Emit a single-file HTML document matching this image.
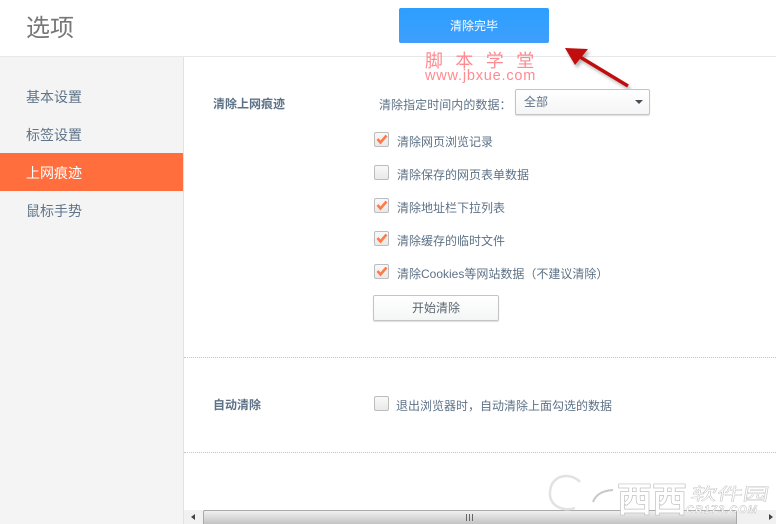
<!DOCTYPE html>
<html lang="zh">
<head>
<meta charset="utf-8">
<style>
html,body{margin:0;padding:0;background:#fff}
body{position:relative;width:776px;height:524px;overflow:hidden;font-family:"Liberation Sans","WenQuanYi Zen Hei","Noto Sans CJK SC",sans-serif;font-size:12px;color:#5d7287}
.a{position:absolute;white-space:nowrap;line-height:16px}
.cb{position:absolute;left:374px;width:13px;height:13px;border:1px solid #bdbdbd;border-radius:2px;background:linear-gradient(#f9f9f9,#e9e9e9)}
.cb svg{position:absolute;left:1px;top:0}
.nav{left:26px;font-size:14px;line-height:18px;color:#5f7488}
</style>
</head>
<body>
<div class="a" style="left:26px;top:14px;font-size:24px;line-height:30px;color:#777">选项</div>
<div style="position:absolute;left:0;top:56px;width:776px;height:1px;background:#e8e8e8"></div>

<div style="position:absolute;left:0;top:57px;width:183px;height:467px;background:#f4f4f4;border-right:1px solid #dfe3e6"></div>
<div style="position:absolute;left:0;top:153px;width:183px;height:38px;background:#ff6e3c"></div>
<div class="a nav" style="top:88px">基本设置</div>
<div class="a nav" style="top:126px">标签设置</div>
<div class="a nav" style="top:164px;color:#fff">上网痕迹</div>
<div class="a nav" style="top:202px">鼠标手势</div>

<div style="position:absolute;left:399px;top:8px;width:150px;height:35px;border-radius:2px;background:linear-gradient(#2c9fff,#3f9ffb);color:#fff;text-align:center;line-height:36px">清除完毕</div>
<div class="a" style="left:425px;top:50px;font-size:18px;line-height:22px;letter-spacing:12.4px;color:#ff8a90">脚本学堂</div>
<div class="a" style="left:425px;top:68px;font-size:14.5px;line-height:17px;letter-spacing:.8px;color:#ff8a90">www.jbxue.com</div>

<svg style="position:absolute;left:560px;top:40px" width="80" height="60" viewBox="0 0 80 60">
<defs><filter id="s" x="-20%" y="-20%" width="140%" height="140%"><feGaussianBlur stdDeviation="1.6"/></filter></defs>
<g transform="translate(2,3)" opacity=".45" filter="url(#s)"><path d="M68 46 L20 17" stroke="#555" stroke-width="3" fill="none"/><path d="M5 8 L28 9 L15 25Z" fill="#555"/></g>
<path d="M68 46 L20 17" stroke="#c00d0d" stroke-width="3.4" fill="none"/>
<path d="M5 8 L28 9 L15 25Z" fill="#c00d0d"/>
</svg>

<div class="a" style="left:213px;top:96px;font-weight:bold">清除上网痕迹</div>
<div class="a" style="left:379px;top:97px;letter-spacing:.05px">清除指定时间内的数据：</div>
<div style="position:absolute;left:515px;top:89px;width:133px;height:24px;border:1px solid #c4c4c4;border-radius:2px;background:linear-gradient(#fff,#f5f5f5);box-shadow:0 1px 1px #ddd"></div>
<div class="a" style="left:524px;top:94px">全部</div>
<div style="position:absolute;left:635px;top:100px;width:0;height:0;border:4px solid transparent;border-top:4px solid #44505c;border-bottom:0"></div>

<div class="cb" style="top:132px"><svg width="12" height="12" viewBox="0 0 12 12"><path d="M1.5 6 L4.5 9.5 L10.5 2.5" stroke="#ff7a48" stroke-width="2.6" fill="none"/></svg></div>
<div class="a" style="left:397px;top:134px">清除网页浏览记录</div>
<div class="cb" style="top:165px"></div>
<div class="a" style="left:397px;top:167px">清除保存的网页表单数据</div>
<div class="cb" style="top:198px"><svg width="12" height="12" viewBox="0 0 12 12"><path d="M1.5 6 L4.5 9.5 L10.5 2.5" stroke="#ff7a48" stroke-width="2.6" fill="none"/></svg></div>
<div class="a" style="left:397px;top:200px">清除地址栏下拉列表</div>
<div class="cb" style="top:231px"><svg width="12" height="12" viewBox="0 0 12 12"><path d="M1.5 6 L4.5 9.5 L10.5 2.5" stroke="#ff7a48" stroke-width="2.6" fill="none"/></svg></div>
<div class="a" style="left:397px;top:233px">清除缓存的临时文件</div>
<div class="cb" style="top:264px"><svg width="12" height="12" viewBox="0 0 12 12"><path d="M1.5 6 L4.5 9.5 L10.5 2.5" stroke="#ff7a48" stroke-width="2.6" fill="none"/></svg></div>
<div class="a" style="left:397px;top:266px">清除Cookies等网站数据（不建议清除）</div>

<div style="position:absolute;left:373px;top:295px;width:124px;height:24px;border:1px solid #c4c4c4;border-radius:2px;background:linear-gradient(#fff,#f4f6f6);box-shadow:0 1px 1px #ddd;text-align:center;line-height:25px;color:#5b6670">开始清除</div>

<div style="position:absolute;left:184px;top:357px;width:592px;border-top:1px dotted #c4c4c4"></div>
<div class="a" style="left:213px;top:397px;font-weight:bold">自动清除</div>
<div class="cb" style="top:396px"></div>
<div class="a" style="left:396px;top:398px">退出浏览器时，自动清除上面勾选的数据</div>
<div style="position:absolute;left:184px;top:452px;width:592px;border-top:1px dotted #c4c4c4"></div>

<div style="position:absolute;left:184px;top:510px;width:592px;height:14px;background:#f1f1f1"></div>
<div style="position:absolute;left:203px;top:510px;width:534px;height:14px;box-sizing:border-box;border:1px solid #a9a9a9;border-bottom:0;border-radius:2px 2px 0 0;background:linear-gradient(#f0f0f0,#dcdcdc 45%,#c2c2c2)"></div>
<div style="position:absolute;left:191px;top:514px;width:0;height:0;border:3px solid transparent;border-right:4px solid #444;border-left:0"></div>
<div style="position:absolute;left:769px;top:514px;width:0;height:0;border:3px solid transparent;border-left:4px solid #444;border-right:0"></div>
<div style="position:absolute;left:466px;top:514px;width:1px;height:7px;background:#666;box-shadow:3px 0 #666,6px 0 #666"></div>

<svg style="position:absolute;left:545px;top:470px" width="231" height="54" viewBox="0 0 231 54">
<path d="M35 12 C26 2 6 4 5 22 C4 36 18 42 30 38" fill="none" stroke="#e2e2e2" stroke-width="2.5"/>
<path d="M48 32 Q52 21 68 20" fill="none" stroke="#c8c8c8" stroke-width="2"/>
<text x="72" y="42" font-family="'WenQuanYi Zen Hei','Noto Sans CJK SC',sans-serif" font-size="35" font-weight="bold" fill="#fff" stroke="#c2c2c2" stroke-width=".7">西西</text>
<g transform="translate(145,30) skewX(-10) scale(1.3,.85)"><text x="0" y="0" font-family="'WenQuanYi Zen Hei','Noto Sans CJK SC',sans-serif" font-size="20" fill="#fff" stroke="#c4c4c4" stroke-width=".5">软件园</text></g>
<text x="141" y="43" font-family="'Liberation Sans',sans-serif" font-size="11" font-style="italic" font-weight="bold" letter-spacing="1" fill="#fff" stroke="#bcbcbc" stroke-width=".4">CR173.COM</text>
</svg>
</body>
</html>
